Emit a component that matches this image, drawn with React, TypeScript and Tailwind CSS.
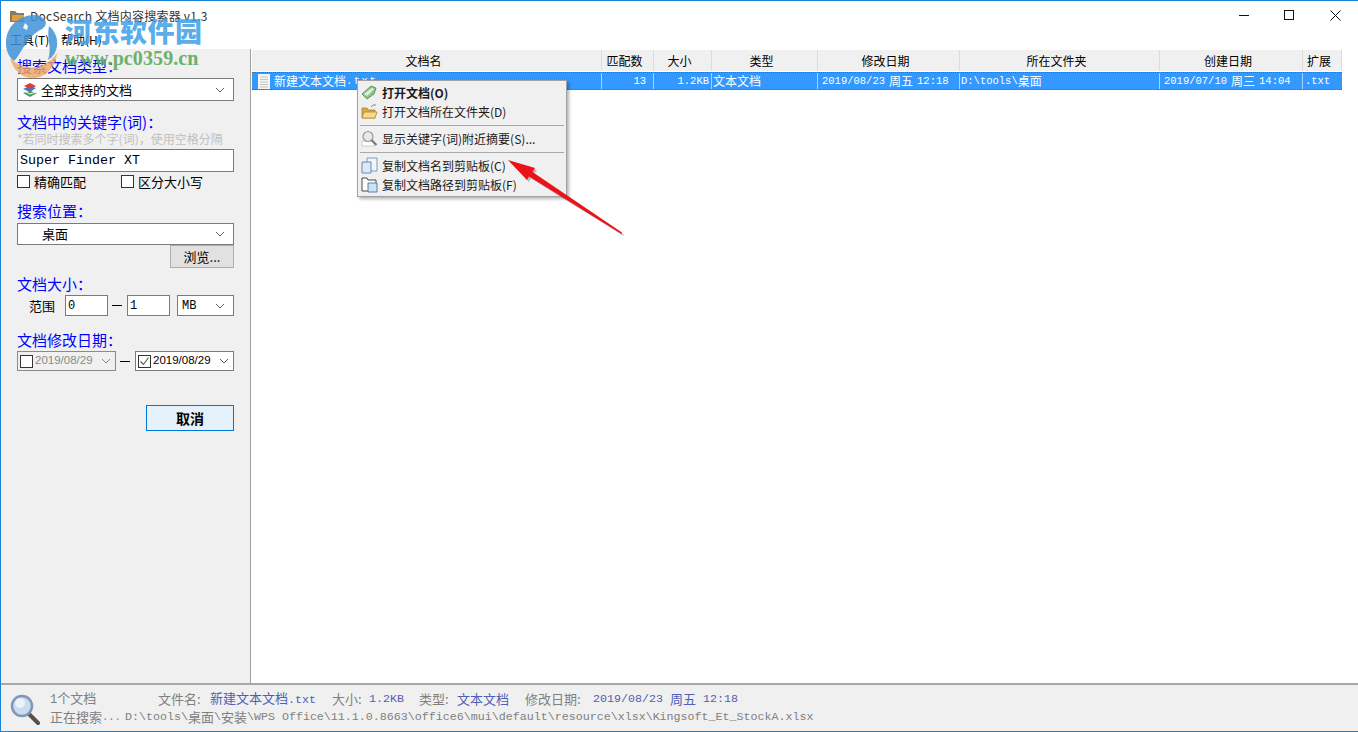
const Chevron = ({ gray = false }: { gray?: boolean }) => (
  <svg width="10" height="6" viewBox="0 0 10 6" className="shrink-0">
    <path d="M1 1l4 4 4-4" fill="none" stroke={gray ? "#8a8a8a" : "#606060"} strokeWidth="1" />
  </svg>
);

const Label = ({ children }: { children: React.ReactNode }) => (
  <div className="h-5 text-[15px] leading-5 text-[#0000ff]">{children}</div>
);

const Mono = ({ children, className = "" }: { children: React.ReactNode; className?: string }) => (
  <span className={`font-['Liberation_Mono',monospace] ${className}`}>{children}</span>
);

const Combo = ({ children, className = "" }: { children: React.ReactNode; className?: string }) => (
  <div className={`flex items-center justify-between border border-[#7a7a7a] bg-white pr-2 ${className}`}>
    {children}
    <Chevron />
  </div>
);

const Check = () => <div className="h-[13px] w-[13px] border border-[#333] bg-white" />;

const BookIcon = () => (
  <svg width="16" height="16" viewBox="0 0 16 16" className="shrink-0">
    <path d="M1 11l7-2 7 2-7 4z" fill="#4a9a5a" />
    <path d="M1 7l7-3 6 2-6 4z" fill="#3f78c8" />
    <path d="M2 4l6-3 6 3-6 3z" fill="#d8403a" />
    <path d="M2 9l6 3 6-2" fill="none" stroke="#fff" strokeWidth="1" />
  </svg>
);

const MenuIcon = ({ kind }: { kind: "open" | "folder" | "find" | "copy" | "path" }) => (
  <svg width="17" height="17" viewBox="0 0 17 17" className="shrink-0">
    {kind === "open" && (
      <>
        <path d="M1 10l9-8 5 2-2 6-7 5z" fill="#8dc58a" stroke="#4e7f55" strokeWidth="0.8" />
        <path d="M3 10l8-6 2 1-7 7z" fill="#e2f1dc" />
      </>
    )}
    {kind === "folder" && (
      <>
        <path d="M1 5h5l1 2h7v8H1z" fill="#d9a94a" stroke="#a9802f" strokeWidth="0.8" />
        <path d="M3 9h13l-2 6H1z" fill="#f7d98a" stroke="#b38a38" strokeWidth="0.8" />
        <path d="M10 4q2-3 5-2" fill="none" stroke="#666" strokeWidth="0.8" />
      </>
    )}
    {kind === "find" && (
      <>
        <path d="M1 11h10l3 5H1z" fill="#fff" stroke="#bbb" strokeWidth="0.7" />
        <circle cx="7" cy="6.5" r="5" fill="#e8e8e8" stroke="#9a9a9a" strokeWidth="1.2" />
        <path d="M10.5 10l5 5" stroke="#777" strokeWidth="2" />
      </>
    )}
    {kind === "copy" && (
      <>
        <path d="M6 1h10v13H6z" fill="#eef5fc" stroke="#6d93b8" strokeWidth="0.9" />
        <path d="M1 5h9v11H1z" fill="#dbe9f7" stroke="#5b7fa5" strokeWidth="0.9" />
      </>
    )}
    {kind === "path" && (
      <>
        <path d="M1 2h5l1 2h8v11H1z" fill="#fff" stroke="#333" strokeWidth="0.9" />
        <path d="M7 7h9v9H7z" fill="#cfe2f5" stroke="#4f7396" strokeWidth="0.9" />
      </>
    )}
  </svg>
);

const columns = [
  { title: "文档名", w: "w-[350px]" },
  { title: "匹配数", w: "w-[52px]" },
  { title: "大小", w: "w-[58px]" },
  { title: "类型", w: "w-[106px]" },
  { title: "修改日期", w: "w-[142px]" },
  { title: "所在文件夹", w: "w-[200px]" },
  { title: "创建日期", w: "w-[143px]" },
  { title: "扩展", w: "w-[39px]" },
];

const menuItems = [
  { icon: "open", label: "打开文档(O)", bold: true, sepAfter: false },
  { icon: "folder", label: "打开文档所在文件夹(D)", bold: false, sepAfter: true },
  { icon: "find", label: "显示关键字(词)附近摘要(S)...", bold: false, sepAfter: true },
  { icon: "copy", label: "复制文档名到剪贴板(C)", bold: false, sepAfter: false },
  { icon: "path", label: "复制文档路径到剪贴板(F)", bold: false, sepAfter: false },
] as const;

const App = () => (
  <div className="relative flex h-[732px] w-[1358px] flex-col overflow-hidden border border-r-0 border-[#1883d7] bg-white font-['Noto_Sans_CJK_SC',sans-serif] text-black">
    {/* title bar */}
    <div className="flex h-[29px] shrink-0 items-center bg-white pl-[9px]">
      <svg width="15" height="14" viewBox="0 0 15 14" className="shrink-0">
        <path d="M0 2h5l2 2h7v9H0z" fill="#8a7a5a" />
        <path d="M2 6h12v6H2z" fill="#e0a040" />
      </svg>
      <span className="ml-[5px] text-[12px] leading-4 tracking-[0.25px] text-[#333]">DocSearch 文档内容搜索器 v1.3</span>
      <div className="ml-auto flex items-center">
        <svg width="11" height="11" viewBox="0 0 11 11">
          <path d="M0 5.5h10" stroke="#111" strokeWidth="1" />
        </svg>
        <svg width="11" height="11" viewBox="0 0 11 11" className="ml-[34px]">
          <rect x="0.5" y="0.5" width="9" height="9" fill="none" stroke="#111" strokeWidth="1" />
        </svg>
        <svg width="11" height="11" viewBox="0 0 11 11" className="ml-[35px] mr-[17px]">
          <path d="M0.5 0.5l10 10M10.5 0.5l-10 10" stroke="#111" strokeWidth="1" />
        </svg>
      </div>
    </div>

    {/* menu bar */}
    <div className="flex h-[19px] shrink-0 items-center bg-white pl-[9px] text-[12px] leading-4">
      <span className="w-[51px]">工具(T)</span>
      <span>帮助(H)</span>
    </div>

    <div className="flex min-h-0 flex-1">
      {/* search panel */}
      <div className="flex w-[250px] shrink-0 flex-col border-r border-[#a0a0a0] bg-[#f0f0f0] pl-[16px] pr-[16px] pt-[7px] text-[13px]">
        <Label>搜索文档类型：</Label>
        <Combo className="mt-[2px] h-[23px] pl-[4px]">
          <span className="flex items-center gap-[3px] leading-4">
            <BookIcon />
            全部支持的文档
          </span>
        </Combo>
        <div className="mt-[11px]">
          <Label>文档中的关键字(词)：</Label>
        </div>
        <div className="mt-[-2px] h-[18px] whitespace-nowrap text-[12px] leading-[18px] text-[#c0c0c0]">
          *若同时搜索多个字(词)，使用空格分隔
        </div>
        <div className="mt-[1px] flex h-[23px] items-center border border-[#7a7a7a] bg-white pl-[2px]">
          <Mono className="text-[13.33px]">Super Finder XT</Mono>
        </div>
        <div className="mt-[3px] flex h-[13px] items-center leading-4">
          <Check />
          <span className="ml-[4px] w-[87px]">精确匹配</span>
          <Check />
          <span className="ml-[4px]">区分大小写</span>
        </div>
        <div className="mt-[13px]">
          <Label>搜索位置：</Label>
        </div>
        <Combo className="mt-[2px] h-[22px] pl-[24px]">
          <span className="leading-4">桌面</span>
        </Combo>
        <div className="flex justify-end">
          <div className="flex h-[23px] w-[64px] items-center justify-center border border-[#adadad] bg-[#e1e1e1] leading-4">
            浏览...
          </div>
        </div>
        <div className="mt-[6px]">
          <Label>文档大小：</Label>
        </div>
        <div className="mt-[1px] flex h-[21px] items-center">
          <span className="ml-[12px] w-[36px] leading-4">范围</span>
          <div className="flex h-[21px] w-[43px] items-center border border-[#7a7a7a] bg-white pl-[2px]">
            <Mono className="text-[12px]">0</Mono>
          </div>
          <div className="mx-[4px] h-px w-[10px] bg-black" />
          <div className="ml-[1px] flex h-[21px] w-[43px] items-center border border-[#7a7a7a] bg-white pl-[2px]">
            <Mono className="text-[12px]">1</Mono>
          </div>
          <Combo className="ml-[7px] h-[21px] w-[57px] pl-[4px]">
            <Mono className="text-[12px]">MB</Mono>
          </Combo>
        </div>
        <div className="mt-[14px]">
          <Label>文档修改日期：</Label>
        </div>
        <div className="mt-[1px] flex h-[20px] items-center text-[11.5px]">
          <div className="flex h-[20px] w-[99px] items-center border border-[#8a8a8a] bg-[#f0f0f0] pl-[2px] pr-[4px] text-[#8a8a8a]">
            <Check />
            <span className="ml-[2px] flex-1 font-['Liberation_Sans',sans-serif]">2019/08/29</span>
            <Chevron gray />
          </div>
          <div className="mx-[4px] h-px w-[10px] bg-black" />
          <div className="ml-[1px] flex h-[20px] w-[99px] items-center border border-[#7a7a7a] bg-white pl-[2px] pr-[4px]">
            <div className="relative h-[13px] w-[13px] border border-[#333] bg-white">
              <svg width="11" height="11" viewBox="0 0 11 11" className="absolute left-0 top-0">
                <path d="M1.5 5.5l3 3 5-7" fill="none" stroke="#555" strokeWidth="1.1" />
              </svg>
            </div>
            <span className="ml-[2px] flex-1 font-['Liberation_Sans',sans-serif]">2019/08/29</span>
            <Chevron />
          </div>
        </div>
        <div className="mt-[34px] flex justify-end">
          <div className="flex h-[26px] w-[88px] items-center justify-center border border-[#0078d7] bg-[#e5f1fb] text-[14px] font-bold leading-4">
            取消
          </div>
        </div>
      </div>

      {/* results list */}
      <div className="flex-1 bg-white pl-[1px] pt-[1px]">
        <div className="flex h-[21px] w-[1090px] bg-[#f0f0f0] text-[12px] leading-4">
          {columns.map((col) => (
            <div
              key={col.title}
              className={`flex items-center justify-center border-r border-[#dcdcdc] pr-[6px] ${col.w}`}
            >
              {col.title}
            </div>
          ))}
        </div>
        <div className="mt-[1px] flex h-[18px] w-[1090px] items-center border-y border-dotted border-[#9a5a10] bg-[#3399ff] text-[12px] leading-4 text-white">
          <div className="flex h-full w-[350px] items-center border-r border-[#a9d2fb] pl-[5px]">
            <svg width="14" height="15" viewBox="0 0 14 15" className="shrink-0">
              <path d="M1 0h12v15H1z" fill="#f4f4f4" />
              <path d="M3 3h8M3 5.5h8M3 8h8M3 10.500h8M3 13h8" stroke="#c4c4c4" strokeWidth="1" />
            </svg>
            <span className="ml-[3px]">新建文本文档</span>
            <Mono className="text-[10.5px] tracking-[1.5px]">.txt</Mono>
          </div>
          <div className="flex h-full w-[52px] items-center justify-end border-r border-[#a9d2fb] pr-[7px]">
            <Mono className="text-[10.5px]">13</Mono>
          </div>
          <div className="flex h-full w-[58px] items-center justify-end border-r border-[#a9d2fb] pr-[2px]">
            <Mono className="text-[10.5px]">1.2KB</Mono>
          </div>
          <div className="flex h-full w-[106px] items-center border-r border-[#a9d2fb] pl-[1px]">文本文档</div>
          <div className="flex h-full w-[142px] items-center border-r border-[#a9d2fb] pl-[4px]">
            <Mono className="text-[10.5px]">2019/08/23</Mono>
            <span className="mx-[4px]">周五</span>
            <Mono className="text-[10.5px]">12:18</Mono>
          </div>
          <div className="flex h-full w-[200px] items-center border-r border-[#a9d2fb] pl-[1px]">
            <Mono className="text-[10.5px]">D:\tools\</Mono>桌面
          </div>
          <div className="flex h-full w-[143px] items-center border-r border-[#a9d2fb] pl-[4px]">
            <Mono className="text-[10.5px]">2019/07/10</Mono>
            <span className="mx-[4px]">周三</span>
            <Mono className="text-[10.5px]">14:04</Mono>
          </div>
          <div className="flex h-full w-[39px] items-center pl-[2px]">
            <Mono className="text-[10.5px]">.txt</Mono>
          </div>
        </div>
      </div>
    </div>

    {/* status bar */}
    <div className="flex h-[48px] shrink-0 border-t-2 border-[#a8a8a8] bg-[#f0f0f0] pl-[9px] text-[13px] text-[#808080]">
      <svg width="30" height="32" viewBox="0 0 30 32" className="mt-[9px] shrink-0">
        <path d="M19 20l9 9" stroke="#55504a" strokeWidth="4" strokeLinecap="round" />
        <circle cx="12" cy="12" r="10" fill="#c9dcf2" stroke="#7f97b5" strokeWidth="2.500" />
        <circle cx="10" cy="9" r="5" fill="#eaf2fb" />
      </svg>
      <div className="ml-[10px] flex flex-col pt-[5px] leading-[18px]">
        <div className="flex h-[18px] items-center whitespace-nowrap">
          <span className="w-[108px]">
            <Mono className="text-[12px]">1</Mono>个文档
          </span>
          <span className="w-[52px]">文件名:</span>
          <span className="w-[122px] text-[#4f5fb8]">
            新建文本文档<Mono className="text-[11.67px]">.txt</Mono>
          </span>
          <span className="w-[37px]">大小:</span>
          <Mono className="w-[50px] text-[11.67px] text-[#4f5fb8]">1.2KB</Mono>
          <span className="w-[38px]">类型:</span>
          <span className="w-[68px] text-[#4f5fb8]">文本文档</span>
          <span className="w-[68px]">修改日期:</span>
          <span className="flex items-center text-[#4f5fb8]">
            <Mono className="text-[11.67px]">2019/08/23</Mono>
            <span className="mx-[7px]">周五</span>
            <Mono className="text-[11.67px]">12:18</Mono>
          </span>
        </div>
        <div className="flex h-[18px] items-center whitespace-nowrap">
          正在搜索<Mono className="text-[10.5px]">...</Mono>
          <Mono className="ml-[4px] text-[11.67px]">D:\tools\</Mono>桌面<Mono className="text-[11.67px]">\</Mono>安装
          <Mono className="text-[11.67px]">\WPS Office\11.1.0.8663\office6\mui\default\resource\xlsx\Kingsoft_Et_StockA.xlsx</Mono>
        </div>
      </div>
    </div>

    {/* context menu */}
    <div className="absolute left-[356px] top-[79px] flex h-[117px] w-[210px] flex-col border border-[#a0a0a0] bg-[#f0f0f0] pt-[2px] shadow-[2px_2px_3px_rgba(0,0,0,0.3)]">
      {menuItems.map((item) => (
        <div key={item.label}>
          <div className="flex h-[19px] items-center gap-[4px] pl-[3px] text-[12px] leading-4 text-[#1a1a1a]">
            <MenuIcon kind={item.icon} />
            <span className={item.bold ? "font-bold" : ""}>{item.label}</span>
          </div>
          {item.sepAfter && <div className="mx-[2px] my-[3px] h-[2px] border-b border-[#a8a8a8]" />}
        </div>
      ))}
    </div>

    {/* red arrow */}
    <svg width="140" height="90" viewBox="0 0 140 90" className="absolute left-[497px] top-[153px]">
      <path d="M10 6L37 14 34.500 18 124 78.500 123.500 80 31 22.500 29 26z" fill="#000" opacity="0.22" transform="translate(2 2)" />
      <path d="M10 6L37 14 34.500 18 124 78.500 123.500 80 31 22.500 29 26z" fill="#e8141a" />
    </svg>

    {/* watermark */}
    <div className="pointer-events-none absolute left-[4px] top-[13px] flex">
      <svg width="58" height="68" viewBox="0 0 58 68" className="shrink-0">
        <path d="M30 1C13 1 1 13 1 29c0 8 3 14 8 18 3-3 6-8 9-13 5-9 11-15 19-19 3-2 5-5 3-9-3-3-6-5-10-5z" fill="#3f93d8" opacity="0.85" />
        <path d="M44 12c6 5 9 12 8 20-1 6-4 11-9 14 2-6 2-12 1-18-1-5-1-11 0-16z" fill="#3f93d8" opacity="0.85" />
        <path d="M5 44c9 9 22 12 33 7 6-3 11-7 14-12-1 13-10 24-23 25C17 65 8 56 5 44z" fill="#f0a860" opacity="0.8" />
        <path d="M20 9l3 3-1 4-4-2z" fill="#fff" opacity="0.9" />
      </svg>
      <div className="ml-[2px] flex flex-col">
        <div className="h-[34px] whitespace-nowrap text-[27px] font-black leading-[34px] tracking-[0.5px] text-[#3f9fe6] opacity-85">
          河东软件园
        </div>
        <div className="whitespace-nowrap font-['Liberation_Serif',serif] text-[20px] font-bold leading-[20px] tracking-[0.1px] text-[#5cab5c] opacity-90">
          www.pc0359.cn
        </div>
      </div>
    </div>
  </div>
);

export default App;
